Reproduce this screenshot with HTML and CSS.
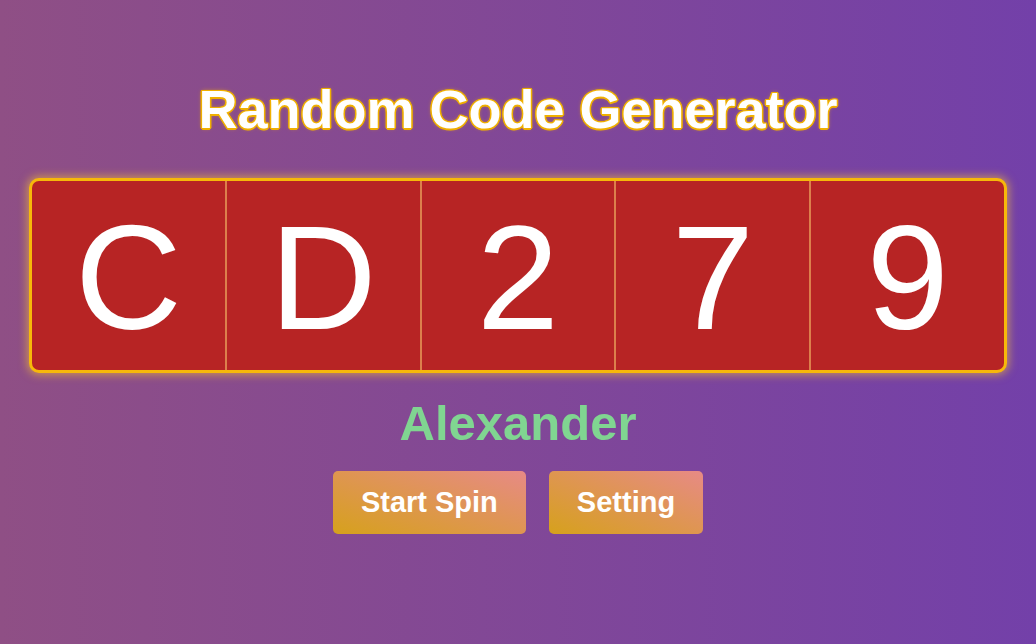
FILE: index.html
```html
<!DOCTYPE html>
<html lang="en">
<head>
<meta charset="utf-8">
<title>Random Code Generator</title>
<link rel="stylesheet" href="styles.css">
</head>
<body>
<main class="page">
  <h1 class="title">Random Code Generator</h1>
  <div class="reel">
    <div class="cell">C</div>
    <div class="cell">D</div>
    <div class="cell">2</div>
    <div class="cell">7</div>
    <div class="cell">9</div>
  </div>
  <div class="name">Alexander</div>
  <div class="actions">
    <button class="btn">Start Spin</button>
    <button class="btn">Setting</button>
  </div>
</main>
</body>
</html>
```

FILE: styles.css
```css
html, body {
  margin: 0;
  padding: 0;
  height: 100%;
}
body {
  background: linear-gradient(to right, #8f4f85, #7340a9);
  font-family: "Liberation Sans", Arial, sans-serif;
}
.page {
  display: flex;
  flex-direction: column;
  align-items: center;
  padding-top: 78px;
}
.title {
  margin: 0;
  font-size: 54px;
  line-height: 62px;
  font-weight: bold;
  color: #fff;
  text-shadow:
    1.5px 0 0 #f0b000, -1.5px 0 0 #f0b000, 0 1.5px 0 #f0b000, 0 -1.5px 0 #f0b000,
    1px 1px 0 #f0b000, -1px -1px 0 #f0b000, 1px -1px 0 #f0b000, -1px 1px 0 #f0b000,
    0 0 4px rgba(240, 176, 0, 0.8);
}
.reel {
  margin-top: 38px;
  width: 972px;
  height: 189px;
  display: flex;
  background: #b72424;
  border: 3px solid #f7b80a;
  border-radius: 10px;
  box-shadow: 0 0 8px 2px rgba(255, 200, 40, 0.55);
  overflow: hidden;
}
.cell {
  flex: 1;
  display: flex;
  align-items: center;
  justify-content: center;
  color: #fff;
  font-size: 148px;
  line-height: 1;
  padding-top: 4px;
  border-right: 2px solid #dc7f4c;
}
.cell:last-child {
  border-right: none;
}
.name {
  margin-top: 22px;
  font-size: 49px;
  line-height: 56px;
  font-weight: bold;
  color: #80d591;
}
.actions {
  margin-top: 20px;
  display: flex;
  gap: 23px;
}
.btn {
  height: 63px;
  padding: 0 28px;
  border: none;
  border-radius: 5px;
  background: linear-gradient(to top right, #d6a11c, #e78a86);
  color: #fff;
  font-family: "Liberation Sans", Arial, sans-serif;
  font-size: 29px;
  font-weight: bold;
}
```
